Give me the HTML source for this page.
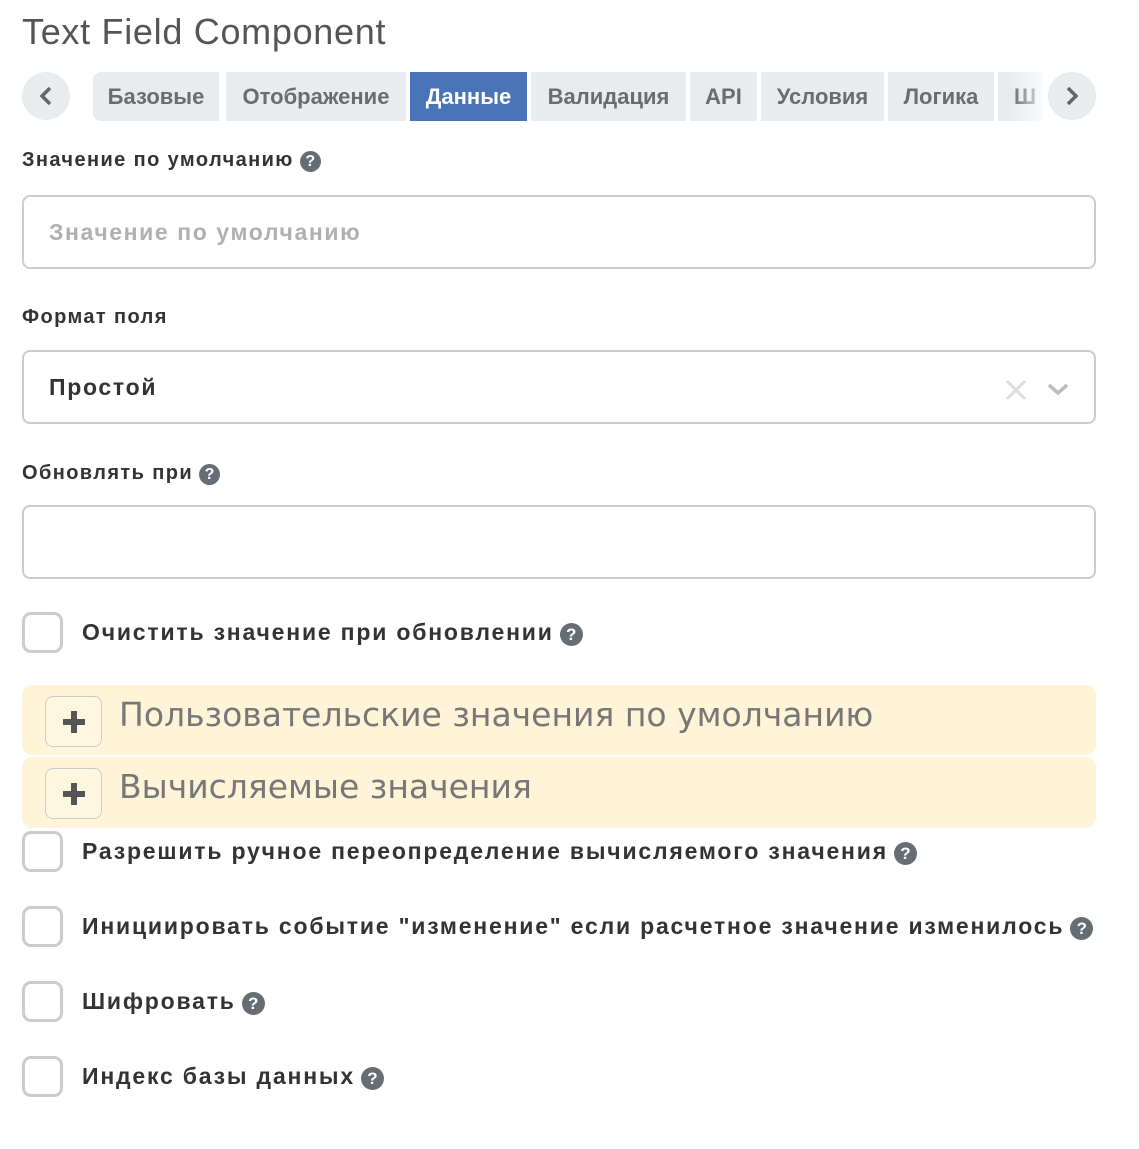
<!DOCTYPE html>
<html><head><meta charset="utf-8"><style>
*{box-sizing:border-box}
body{margin:0;width:1139px;height:1149px;background:#fff;font-family:"Liberation Sans",sans-serif;position:relative;overflow:hidden}
.abs{position:absolute}
h1{position:absolute;left:22px;top:11px;margin:0;font-weight:400;font-size:36px;color:#555;letter-spacing:0.7px}
.circ{position:absolute;top:72px;width:48px;height:48px;border-radius:50%;background:#e8ecee}
.tab{position:absolute;top:72px;height:49px;background:#e8ecee;color:#6c6c6c;font-weight:700;font-size:22px;line-height:49px;text-align:center}
.lbl{position:absolute;left:22px;font-weight:700;font-size:20px;color:#333;letter-spacing:1.4px}
.q{display:inline-block;width:21px;height:21px;border-radius:50%;background:#666d75;color:#fff;font-size:16px;line-height:21px;text-align:center;vertical-align:0px;margin-left:6px;letter-spacing:0}
.inp{position:absolute;left:22px;width:1074px;height:74px;border:2px solid #ccc;border-radius:8px}
.cb{position:absolute;left:22px;width:41px;height:41px;border:3px solid #ccc;border-radius:9px}
.cbl{position:absolute;left:82px;font-weight:700;font-size:23px;color:#333;letter-spacing:1.8px}
.cbl .q{width:23px;height:23px;line-height:23px;font-size:17px;margin-left:6px}
.acc{position:absolute;left:22px;width:1074px;height:70px;background:#fff4d8;border-radius:10px}
.pl{position:absolute;left:23px;top:11px;width:57px;height:51px;border:1px solid #ccc;border-radius:8px;background:#fff6e0}
.acc .t{position:absolute;left:97px;top:10px;font-family:"DejaVu Sans",sans-serif;font-size:33px;color:#777}
</style></head><body>
<h1>Text Field Component</h1>
<div class="circ" style="left:22px"><svg width="48" height="48"><path d="M28 16 L20 24 L28 32" stroke="#666" stroke-width="3.5" fill="none"/></svg></div>
<div class="tab" style="left:93px;width:126px;border-radius:8px 0 0 8px">Базовые</div>
<div class="tab" style="left:226px;width:180px">Отображение</div>
<div class="tab" style="left:410px;width:117px;background:#4a74b8;color:#fff">Данные</div>
<div class="tab" style="left:531px;width:155px">Валидация</div>
<div class="tab" style="left:690px;width:67px">API</div>
<div class="tab" style="left:761px;width:123px">Условия</div>
<div class="tab" style="left:888px;width:106px">Логика</div>
<div class="tab" style="left:998px;width:45px;text-align:left;padding-left:16px;overflow:hidden">Ш</div>
<div class="abs" style="left:1012px;top:72px;width:38px;height:49px;background:linear-gradient(to right,rgba(255,255,255,0),#fff)"></div>
<div class="circ" style="left:1048px"><svg width="48" height="48"><path d="M20 16 L28 24 L20 32" stroke="#666" stroke-width="3.5" fill="none"/></svg></div>

<div class="lbl" style="top:149px">Значение по умолчанию<span class="q">?</span></div>
<div class="inp" style="top:195px"><span class="abs" style="left:25px;top:22px;font-size:23px;font-weight:700;color:#b0b0b0;letter-spacing:1.6px">Значение по умолчанию</span></div>

<div class="lbl" style="top:306px">Формат поля</div>
<div class="inp" style="top:350px"><span class="abs" style="left:25px;top:22px;font-size:23px;font-weight:700;color:#333;letter-spacing:1.7px">Простой</span>
<svg class="abs" style="left:980px;top:26px" width="24" height="24"><path d="M3 3L21 21M21 3L3 21" stroke="#ddd" stroke-width="3"/></svg>
<svg class="abs" style="left:1022px;top:28px" width="24" height="20"><path d="M3 5L12 13L21 5" stroke="#bbb" stroke-width="3.5" fill="none"/></svg></div>

<div class="lbl" style="top:462px">Обновлять при<span class="q">?</span></div>
<div class="inp" style="top:505px"></div>

<div class="cb" style="top:612px"></div><div class="cbl" style="top:619px">Очистить значение при обновлении<span class="q">?</span></div>

<div class="acc" style="top:685px"><div class="pl"><svg width="57" height="51"><path d="M28 14V36M17 25H39" stroke="#555" stroke-width="6"/></svg></div><div class="t">Пользовательские значения по умолчанию</div></div>
<div class="acc" style="top:757px;height:71px"><div class="pl"><svg width="57" height="51"><path d="M28 14V36M17 25H39" stroke="#555" stroke-width="6"/></svg></div><div class="t">Вычисляемые значения</div></div>

<div class="cb" style="top:831px"></div><div class="cbl" style="top:838px">Разрешить ручное переопределение вычисляемого значения<span class="q">?</span></div>
<div class="cb" style="top:906px"></div><div class="cbl" style="top:913px">Инициировать событие "изменение" если расчетное значение изменилось<span class="q">?</span></div>
<div class="cb" style="top:981px"></div><div class="cbl" style="top:988px">Шифровать<span class="q">?</span></div>
<div class="cb" style="top:1056px"></div><div class="cbl" style="top:1063px">Индекс базы данных<span class="q">?</span></div>
</body></html>
